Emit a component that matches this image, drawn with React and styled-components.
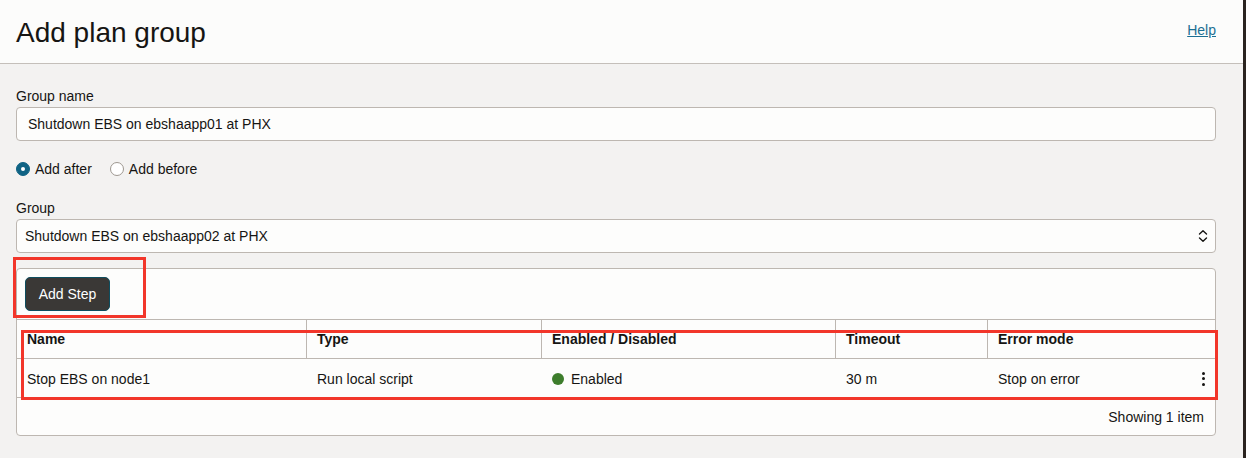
import React from "react";
import styled, { createGlobalStyle } from "styled-components";

const GlobalStyle = createGlobalStyle`
  html, body {
    margin: 0;
    padding: 0;
    background: #f3f2f1;
  }
  body {
    font-family: "Liberation Sans", Arial, sans-serif;
    color: #161513;
  }
`;

const columns = [
  { key: "name", label: "Name", width: "290px" },
  { key: "type", label: "Type", width: "235px" },
  { key: "enabled", label: "Enabled / Disabled", width: "294px" },
  { key: "timeout", label: "Timeout", width: "152px" },
  { key: "errorMode", label: "Error mode", width: "1fr" },
];

const steps = [
  {
    name: "Stop EBS on node1",
    type: "Run local script",
    enabled: true,
    timeout: "30 m",
    errorMode: "Stop on error",
  },
];

const gridTemplate = columns.map((c) => c.width).join(" ");

const App = () => {
  return (
    <>
      <GlobalStyle />
      <Frame>
        <Page>
          <Header>
            <Title>Add plan group</Title>
            <HelpLink href="#help">Help</HelpLink>
          </Header>
          <Body>
            <Label>Group name</Label>
            <TextInput>Shutdown EBS on ebshaapp01 at PHX</TextInput>

            <RadioRow>
              <RadioOption>
                <Radio checked />
                Add after
              </RadioOption>
              <RadioOption>
                <Radio />
                Add before
              </RadioOption>
            </RadioRow>

            <Label $top="21px">Group</Label>
            <Select>
              <span>Shutdown EBS on ebshaapp02 at PHX</span>
              <svg width="10" height="14" viewBox="0 0 10 14" fill="none">
                <path
                  d="M1.5 5L5 1.8L8.5 5"
                  stroke="#161513"
                  strokeWidth="1.4"
                  strokeLinecap="round"
                  strokeLinejoin="round"
                />
                <path
                  d="M1.5 9L5 12.2L8.5 9"
                  stroke="#161513"
                  strokeWidth="1.4"
                  strokeLinecap="round"
                  strokeLinejoin="round"
                />
              </svg>
            </Select>

            <Panel>
              <Toolbar>
                <Highlight $top="-12px" $left="-4px" $width="133px" $height="61px" />
                <Button>Add Step</Button>
              </Toolbar>
              <TableArea>
                <Highlight $top="10px" $left="4px" $width="1197px" $height="70px" />
                <HeadRow>
                  {columns.map((c) => (
                    <HeadCell key={c.key}>{c.label}</HeadCell>
                  ))}
                </HeadRow>
                {steps.map((s) => (
                  <DataRow key={s.name}>
                    <Cell>{s.name}</Cell>
                    <Cell>{s.type}</Cell>
                    <Cell>
                      <StatusDot $on={s.enabled} />
                      {s.enabled ? "Enabled" : "Disabled"}
                    </Cell>
                    <Cell>{s.timeout}</Cell>
                    <Cell>
                      {s.errorMode}
                      <Kebab>
                        <i />
                        <i />
                        <i />
                      </Kebab>
                    </Cell>
                  </DataRow>
                ))}
              </TableArea>
              <Footer>Showing 1 item</Footer>
            </Panel>
          </Body>
        </Page>
        <Edge />
      </Frame>
    </>
  );
};

const Frame = styled.div`
  display: flex;
  width: 1246px;
  height: 458px;
  overflow: hidden;
`;

const Page = styled.div`
  flex: 1;
  display: flex;
  flex-direction: column;
  background: #f3f2f1;
`;

const Edge = styled.div`
  width: 3px;
  background: #2b2420;
`;

const Header = styled.div`
  height: 63px;
  display: flex;
  align-items: center;
  justify-content: space-between;
  padding: 0 27px 0 16px;
  background: #fcfcfb;
  border-bottom: 1px solid #c4bfba;
`;

const Title = styled.h1`
  margin: 0;
  font-size: 28px;
  font-weight: 400;
  color: #161513;
  line-height: 1;
  padding-top: 2px;
`;

const HelpLink = styled.a`
  font-size: 14px;
  color: #1b6f93;
  text-decoration: underline;
  margin-bottom: 3px;
`;

const Body = styled.div`
  padding: 24px 27px 0 16px;
  display: flex;
  flex-direction: column;
`;

const Label = styled.div`
  font-size: 14px;
  line-height: 17px;
  margin-top: ${(p) => p.$top || "0"};
  margin-bottom: 2px;
`;

const TextInput = styled.div`
  height: 34px;
  box-sizing: border-box;
  display: flex;
  align-items: center;
  padding: 0 11px;
  background: #fdfdfc;
  border: 1px solid #bdb7b1;
  border-radius: 4px;
  font-size: 14px;
`;

const RadioRow = styled.div`
  display: flex;
  align-items: center;
  gap: 18px;
  height: 20px;
  margin-top: 18px;
`;

const RadioOption = styled.label`
  display: flex;
  align-items: center;
  gap: 5px;
  font-size: 14px;
`;

const Radio = styled.span`
  width: 14px;
  height: 14px;
  box-sizing: border-box;
  border-radius: 50%;
  position: relative;
  background: ${(p) => (p.checked ? "#0f6384" : "#fff")};
  border: 1px solid ${(p) => (p.checked ? "#0f6384" : "#9e9891")};
  &::after {
    content: "";
    display: ${(p) => (p.checked ? "block" : "none")};
    position: absolute;
    width: 4px;
    height: 4px;
    border-radius: 50%;
    background: #fff;
    left: 4px;
    top: 4px;
  }
`;

const Select = styled.div`
  height: 34px;
  box-sizing: border-box;
  display: flex;
  align-items: center;
  justify-content: space-between;
  padding: 0 7px 0 8px;
  background: #fdfdfc;
  border: 1px solid #bdb7b1;
  border-radius: 4px;
  font-size: 14px;
`;

const Panel = styled.div`
  margin-top: 15px;
  background: #fdfdfc;
  border: 1px solid #bdb7b1;
  border-radius: 4px;
  display: flex;
  flex-direction: column;
`;

const Toolbar = styled.div`
  position: relative;
  padding: 8px 8px 8px;
  border-bottom: 1px solid #bdb7b1;
`;

const Highlight = styled.div`
  position: absolute;
  top: ${(p) => p.$top};
  left: ${(p) => p.$left};
  width: ${(p) => p.$width};
  height: ${(p) => p.$height};
  box-sizing: border-box;
  border: 3px solid #f2362a;
  pointer-events: none;
  z-index: 2;
`;

const Button = styled.button`
  height: 34px;
  width: 85px;
  box-sizing: border-box;
  background: #3a3836;
  color: #ffffff;
  border: 1.5px solid #0e4d5e;
  border-radius: 5px;
  font-family: "Liberation Sans", Arial, sans-serif;
  font-size: 14px;
  padding: 0;
`;

const TableArea = styled.div`
  position: relative;
`;

const HeadRow = styled.div`
  display: grid;
  grid-template-columns: ${gridTemplate};
  height: 38px;
  border-bottom: 1px solid #bdb7b1;
`;

const HeadCell = styled.div`
  display: flex;
  align-items: center;
  padding: 0 10px;
  font-size: 14px;
  font-weight: 700;
  border-right: 1px solid #bdb7b1;
  &:last-child {
    border-right: none;
  }
`;

const DataRow = styled.div`
  display: grid;
  grid-template-columns: ${gridTemplate};
  height: 38px;
  border-bottom: 1px solid #bdb7b1;
`;

const Cell = styled.div`
  display: flex;
  align-items: center;
  padding: 1px 10px 0 10px;
  font-size: 14px;
  &:last-child {
    justify-content: space-between;
  }
`;

const StatusDot = styled.span`
  width: 12px;
  height: 12px;
  border-radius: 50%;
  background: ${(p) => (p.$on ? "#3d7d2c" : "#9e9891")};
  margin-right: 7px;
`;

const Kebab = styled.span`
  display: flex;
  flex-direction: column;
  align-items: center;
  gap: 2.5px;
  i {
    display: block;
    width: 3px;
    height: 3px;
    border-radius: 50%;
    background: #161513;
  }
`;

const Footer = styled.div`
  height: 37px;
  display: flex;
  align-items: center;
  justify-content: flex-end;
  padding-right: 11px;
  font-size: 14px;
`;

export default App;
